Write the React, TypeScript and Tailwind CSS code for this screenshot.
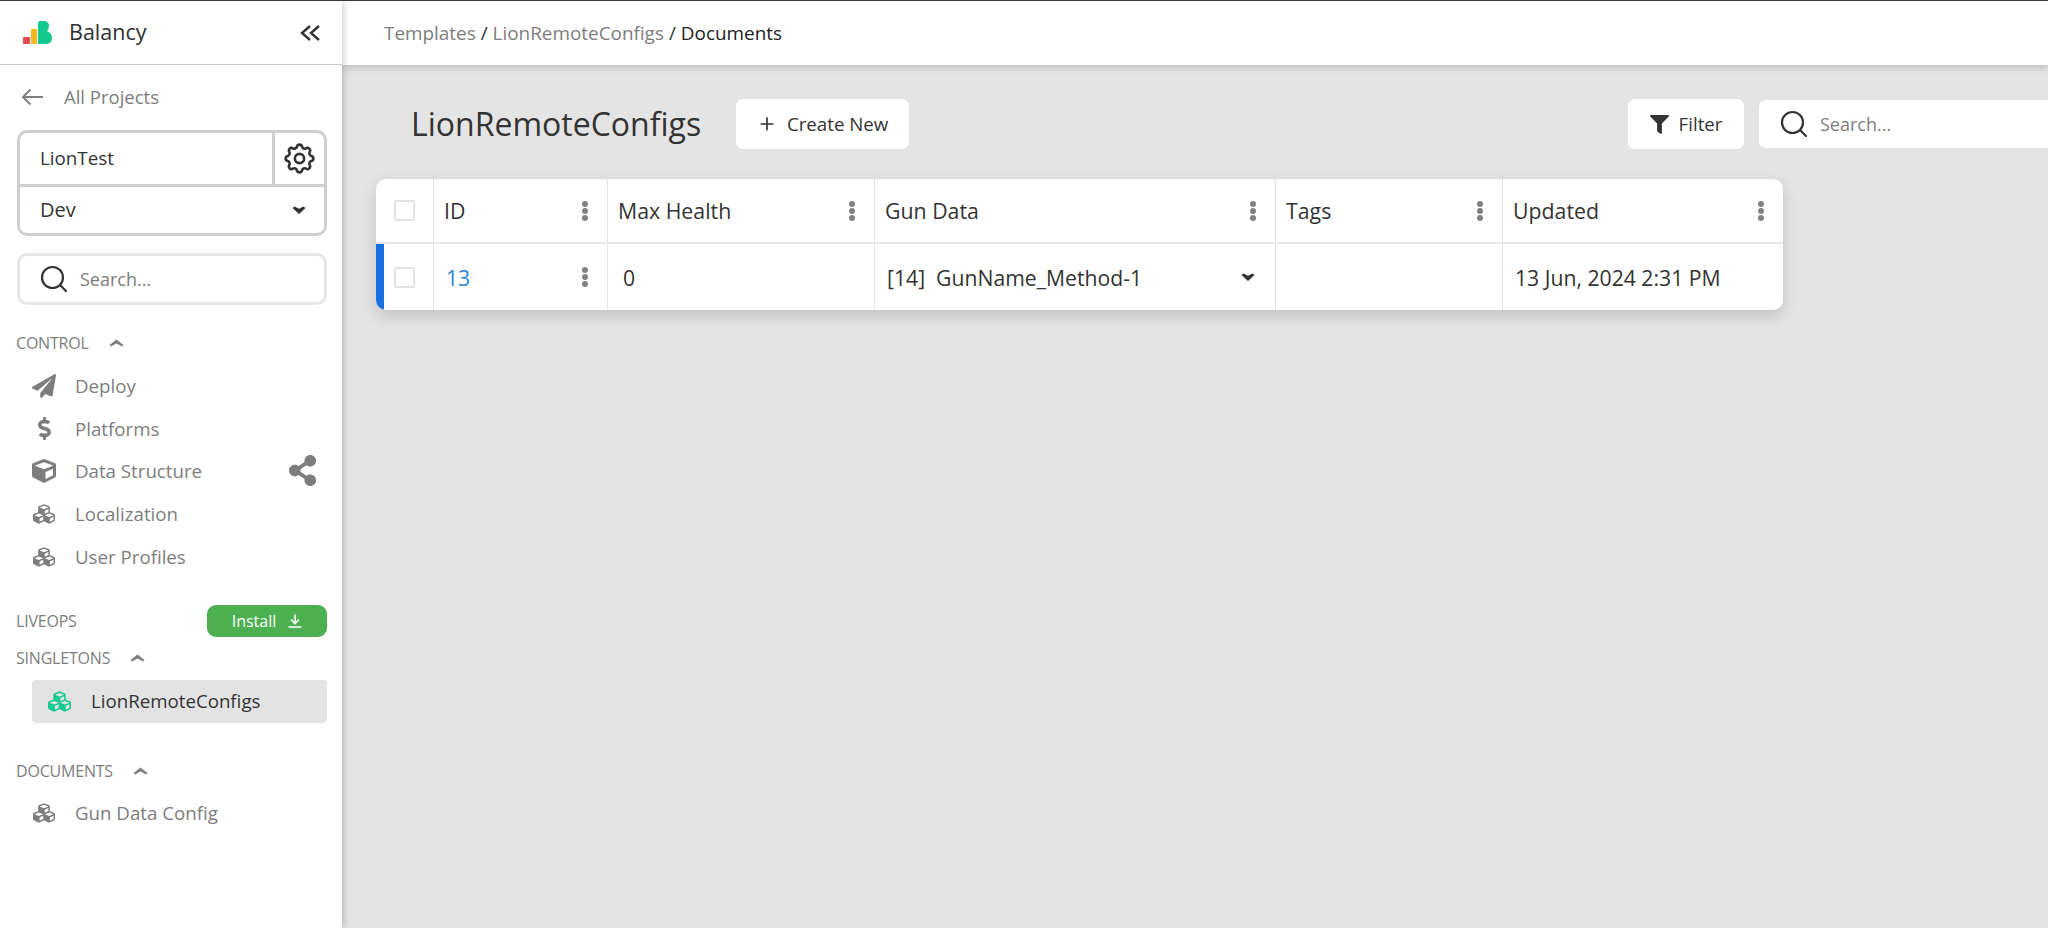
import React from "react";
import { Plus } from "lucide-react";
import { HiOutlineCog } from "react-icons/hi";
import { FaCube, FaCubes, FaDollarSign, FaFilter, FaPaperPlane, FaShareAlt } from "react-icons/fa";

const Logo = () => (
	<svg width="30" height="24" viewBox="0 0 30 24">
		<rect x="0" y="16" width="7" height="7" rx="1" fill="#e5484d" />
		<rect x="8" y="8" width="6" height="15" rx="1" fill="#f5b81f" />
		<path d="M15 2 Q15 0 17 0 H21 Q26 0 26 5 Q26 8 24 10 Q29 12 29 17 Q29 23 22 23 H15 Z" fill="#14c98f" />
	</svg>
);

const CollapseIcon = () => (
	<svg width="20" height="16" viewBox="0 0 20 16" fill="none" stroke="#333" strokeWidth="2.4">
		<path d="M10 1 L2 8 L10 15 M19 1 L11 8 L19 15" />
	</svg>
);

const BackArrow = () => (
	<svg width="22" height="18" viewBox="0 0 22 18" fill="none" stroke="#808080" strokeWidth="2">
		<path d="M22 9 H2 M9.5 1.5 L2 9 L9.5 16.5" />
	</svg>
);

const SearchIcon = ({ className }: { className?: string }) => (
	<svg className={className} width="28" height="28" viewBox="0 0 28 28" fill="none" stroke="#333" strokeWidth="2.2">
		<circle cx="12.5" cy="12.5" r="10.5" />
		<path d="M20 20 L26 26" strokeLinecap="round" />
	</svg>
);

const ChevronDown = () => (
	<svg width="14" height="8" viewBox="0 0 14 8" fill="#333">
		<path d="M0.5 2 L2.5 0.5 L7 2.8 L11.5 0.5 L13.5 2 L7 8 Z" />
	</svg>
);

const ChevronUp = () => (
	<svg width="15" height="8" viewBox="0 0 15 8" fill="#808080">
		<path d="M0.5 6 L7.5 0.5 L14.5 6 L13 7.5 L7.5 4.5 L2 7.5 Z" />
	</svg>
);

const Dots = () => (
	<svg width="8" height="22" viewBox="0 0 8 22" fill="#808080">
		<circle cx="4" cy="4" r="3" />
		<circle cx="4" cy="11" r="3" />
		<circle cx="4" cy="18" r="3" />
	</svg>
);

const InstallIcon = () => (
	<svg width="14" height="14" viewBox="0 0 14 14" fill="none" stroke="#fff" strokeWidth="1.6">
		<path d="M7 0.5 V9 M3 5.5 L7 9.5 L11 5.5 M0.5 13 H13.5" />
	</svg>
);

const Checkbox = () => <span className="block w-[21px] h-[21px] border-2 border-[#e2e2e2] rounded-[2px] bg-white" />;

const NavItem = ({ icon, label }: { icon: React.ReactNode; label: string }) => (
	<div className="h-[42.6px] flex items-center pl-[31px] text-[18.7px] text-[#7d7d7d]">
		<span className="w-[26px] flex justify-center text-[#7d7d7d]">{icon}</span>
		<span className="ml-[18px]">{label}</span>
	</div>
);

const SectionLabel = ({ label }: { label: string }) => (
	<div className="flex items-center gap-[20px] pl-[16px] text-[16px] tracking-[-0.2px] text-[#7d7d7d]">
		<span>{label}</span>
		<ChevronUp />
	</div>
);

const Sidebar = () => (
	<aside className="w-[342px] shrink-0 bg-white flex flex-col relative z-20 shadow-[2px_0_6px_rgba(0,0,0,0.18)]">
		<div className="h-[64px] shrink-0 border-b border-[#c8c8c8] flex items-center pl-[23px] pr-[22px]">
			<Logo />
			<span className="ml-[16px] text-[21.5px] text-[#2f2f2f]">Balancy</span>
			<span className="ml-auto">
				<CollapseIcon />
			</span>
		</div>
		<div className="flex items-center h-[28px] mt-[18px] pl-[21px] text-[18.5px] text-[#7d7d7d]">
			<BackArrow />
			<span className="ml-[21px]">All Projects</span>
		</div>
		<div className="ml-[17px] mr-[15px] mt-[19px] h-[106px] border-[3px] border-[#cfcfcf] rounded-[10px] flex flex-col text-[18.8px] text-[#333]">
			<div className="h-[54px] flex border-b-[3px] border-[#cfcfcf]">
				<div className="flex-1 flex items-center pl-[20px] border-r-[3px] border-[#cfcfcf]">LionTest</div>
				<div className="w-[49px] flex items-center justify-center">
					<HiOutlineCog size={37} strokeWidth={1.7} />
				</div>
			</div>
			<div className="flex-1 flex items-center justify-between pl-[20px] pr-[18px] text-[20px]">
				<span>Dev</span>
				<ChevronDown />
			</div>
		</div>
		<div className="ml-[17px] mr-[15px] mt-[17px] h-[52px] border-[3px] border-[#e6e6e6] rounded-[10px] flex items-center pl-[20px] text-[18px] text-[#7d7d7d]">
			<SearchIcon />
			<span className="ml-[12px]">Search...</span>
		</div>
		<div className="mt-[26px]">
			<SectionLabel label="CONTROL" />
		</div>
		<div className="mt-[10px]">
			<NavItem icon={<FaPaperPlane size={24} />} label="Deploy" />
			<NavItem icon={<FaDollarSign size={23} />} label="Platforms" />
			<div className="relative">
				<NavItem icon={<FaCube size={24} />} label="Data Structure" />
				<FaShareAlt className="absolute right-[24px] top-[5px] text-[#7d7d7d]" size={31} />
			</div>
			<NavItem icon={<FaCubes size={22} />} label="Localization" />
			<NavItem icon={<FaCubes size={22} />} label="User Profiles" />
		</div>
		<div className="mt-[27px] mr-[15px] h-[32px] flex items-center justify-between pl-[16px] text-[16px] text-[#7d7d7d]">
			<span className="tracking-[-0.2px]">LIVEOPS</span>
			<div className="w-[120px] h-[32px] bg-[#4caf50] rounded-[9px] flex items-center justify-center gap-[12px] text-white text-[16px]">
				<span>Install</span>
				<InstallIcon />
			</div>
		</div>
		<div className="mt-[9px]">
			<SectionLabel label="SINGLETONS" />
		</div>
		<div className="mt-[10px] ml-[32px] mr-[15px] h-[43px] bg-[#e3e3e3] rounded-[4px] flex items-center pl-[16px] text-[18.7px] text-[#333]">
			<FaCubes className="text-[#14c98f]" size={23} />
			<span className="ml-[20px]">LionRemoteConfigs</span>
		</div>
		<div className="mt-[36px]">
			<SectionLabel label="DOCUMENTS" />
		</div>
		<div className="mt-[9px]">
			<NavItem icon={<FaCubes size={22} />} label="Gun Data Config" />
		</div>
	</aside>
);

const HeaderCell = ({ label, className }: { label: string; className: string }) => (
	<div className={`${className} flex items-center justify-between pl-[10px] pr-[18px] border-r border-[#e4e4e4] text-[21.3px] text-[#333]`}>
		<span>{label}</span>
		<Dots />
	</div>
);

const Table = () => (
	<div className="w-[1407px] bg-white rounded-[10px] shadow-[0_6px_16px_rgba(0,0,0,0.16)] overflow-hidden">
		<div className="h-[65px] flex border-b-2 border-[#e6e6e6]">
			<div className="w-[58px] flex items-center justify-center pr-[1px] border-r border-[#e4e4e4]">
				<Checkbox />
			</div>
			<HeaderCell label="ID" className="w-[174px]" />
			<HeaderCell label="Max Health" className="w-[267px]" />
			<HeaderCell label="Gun Data" className="w-[401px]" />
			<HeaderCell label="Tags" className="w-[227px]" />
			<HeaderCell label="Updated" className="flex-1 border-r-0" />
		</div>
		<div className="h-[66px] flex text-[#333] text-[21.2px] relative">
			<span className="absolute left-0 top-0 bottom-0 w-[8px] bg-[#1a6fe0] rounded-bl-[10px]" />
			<div className="w-[58px] flex items-center justify-center pr-[1px] border-r border-[#e4e4e4]">
				<Checkbox />
			</div>
			<div className="w-[174px] flex items-center justify-between pl-[12px] pr-[18px] border-r border-[#e4e4e4]">
				<span className="text-[#2a86d8] pt-[2px]">13</span>
				<Dots />
			</div>
			<div className="w-[267px] flex items-center pl-[15px] pt-[2px] border-r border-[#e4e4e4]">0</div>
			<div className="w-[401px] flex items-center justify-between pl-[12px] pr-[20px] border-r border-[#e4e4e4]">
				<span className="whitespace-pre pt-[2px]">[14]  GunName_Method-1</span>
				<ChevronDown />
			</div>
			<div className="w-[227px] border-r border-[#e4e4e4]" />
			<div className="flex-1 flex items-center pl-[12px] pt-[2px]">13 Jun, 2024 2:31 PM</div>
		</div>
	</div>
);

const App = () => {
	return (
		<div className="w-screen h-screen flex overflow-hidden bg-[#e4e4e4] border-t border-[#3a3a3a] font-['Open_Sans',sans-serif]">
			<Sidebar />
			<main className="flex-1 min-w-0 flex flex-col">
				<div className="h-[64px] shrink-0 bg-white flex items-center pl-[42px] text-[18.9px] text-[#7d7d7d] shadow-[0_2px_8px_rgba(0,0,0,0.2)] relative z-10">
					<span>Templates</span>
					<span className="text-[#333] mx-[5px]">/</span>
					<span>LionRemoteConfigs</span>
					<span className="text-[#333] mx-[5px]">/</span>
					<span className="text-[#222]">Documents</span>
				</div>
				<div className="flex items-center h-[50px] mt-[34px] pl-[69px]">
					<h1 className="text-[32px] text-[#333]">LionRemoteConfigs</h1>
					<button className="ml-[35px] w-[173px] h-[50px] bg-white rounded-[7px] flex items-center justify-center gap-[10px] text-[18.7px] text-[#333]">
						<Plus size={20} strokeWidth={2} />
						<span>Create New</span>
					</button>
					<button className="ml-auto w-[116px] h-[50px] bg-white rounded-[7px] flex items-center justify-center gap-[10px] text-[18.7px] text-[#333] shrink-0">
						<FaFilter size={19} />
						<span>Filter</span>
					</button>
					<div className="ml-[15px] w-[289px] h-[48px] shrink-0 bg-white rounded-l-[7px] flex items-center pl-[21px] text-[18px] text-[#7d7d7d]">
						<SearchIcon />
						<span className="ml-[12px]">Search...</span>
					</div>
				</div>
				<div className="pl-[34px] mt-[30px]">
					<Table />
				</div>
			</main>
		</div>
	);
};

export default App;
